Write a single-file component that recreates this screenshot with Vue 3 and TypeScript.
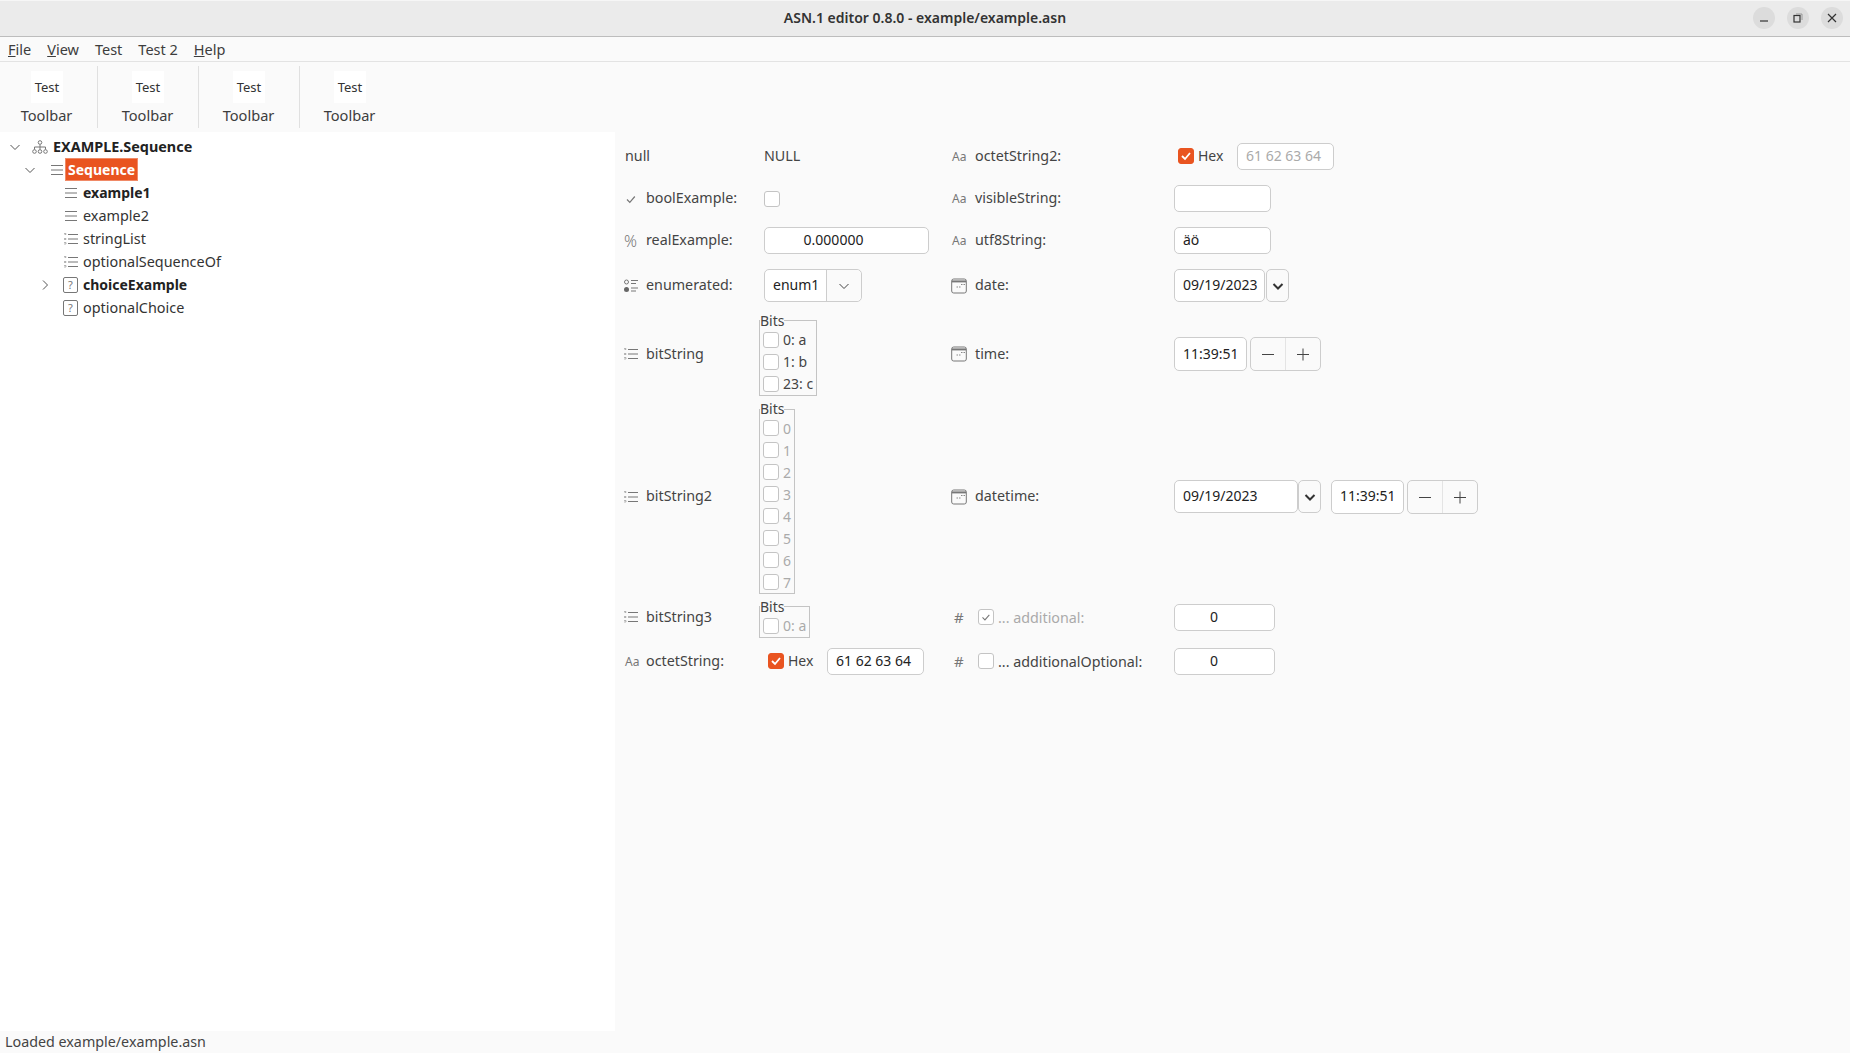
<script setup lang="ts">
const menus = [
  { u: 'F', rest: 'ile' },
  { u: 'V', rest: 'iew' },
  { u: '', rest: 'Test' },
  { u: '', rest: 'Test 2' },
  { u: 'H', rest: 'elp' },
]
const tools = [1, 2, 3, 4]
interface TreeRow { text: string; depth: number; arrow?: 'down' | 'right'; icon: string; bold?: boolean; sel?: boolean }
const tree: TreeRow[] = [
  { text: 'EXAMPLE.Sequence', depth: 0, arrow: 'down', icon: 'i-tree', bold: true },
  { text: 'Sequence', depth: 1, arrow: 'down', icon: 'i-lines', bold: true, sel: true },
  { text: 'example1', depth: 2, icon: 'i-lines', bold: true },
  { text: 'example2', depth: 2, icon: 'i-lines' },
  { text: 'stringList', depth: 2, icon: 'i-list' },
  { text: 'optionalSequenceOf', depth: 2, icon: 'i-list' },
  { text: 'choiceExample', depth: 2, arrow: 'right', icon: 'choice', bold: true },
  { text: 'optionalChoice', depth: 2, icon: 'choice' },
]
const bits1 = ['0: a', '1: b', '23: c']
const bits2 = ['0', '1', '2', '3', '4', '5', '6', '7']
</script>

<template>
  <div class="win">
    <svg class="defs" width="0" height="0" aria-hidden="true">
      <symbol id="i-tree" viewBox="0 0 16 16">
        <g fill="none" stroke="#777" stroke-width="1">
          <circle cx="8" cy="3.5" r="1.8" /><circle cx="2.5" cy="12.5" r="1.8" /><circle cx="8" cy="12.5" r="1.8" /><circle cx="13.5" cy="12.5" r="1.8" />
          <path d="M8 5.5v5M2.5 10.5V8h11v2.5" />
        </g>
      </symbol>
      <symbol id="i-lines" viewBox="0 0 16 16">
        <path d="M2 3.5h12M2 8h12M2 12.5h12" stroke="#777" stroke-width="1" fill="none" />
      </symbol>
      <symbol id="i-list" viewBox="0 0 16 16">
        <path d="M5 3.5h10M5 8h10M5 12.500h10" stroke="#777" stroke-width="1" fill="none" />
        <path d="M1 2.500h2v1H1.500M1 7.500h2v1H1M1 11.500h2v1.500H1" stroke="#999" stroke-width=".7" fill="none" />
      </symbol>
      <symbol id="i-check" viewBox="0 0 16 16">
        <path d="M4 8.500l2.800 2.800 5-5.800" fill="none" stroke="#777" stroke-width="1.200" />
      </symbol>
      <symbol id="i-enum" viewBox="0 0 16 16">
        <circle cx="3.500" cy="4" r="2" fill="none" stroke="#777" />
        <circle cx="3.500" cy="11.500" r="2.500" fill="#666" />
        <path d="M8 2.500h7M8 5.500h5M8 10h7M8 13h5" stroke="#777" fill="none" />
      </symbol>
      <symbol id="i-cal" viewBox="0 0 16 16">
        <rect x=".7" y="1" width="14.600" height="14" rx="2" fill="#fafafa" stroke="#777" />
        <path d="M1 3.400h14" stroke="#777" stroke-width="2" />
        <path d="M10 6.500h1.500M12.500 6.500h1.500M5.500 9h1.500M8 9h1.500" stroke="#888" />
      </symbol>
      <symbol id="i-chev" viewBox="0 0 16 16">
        <path d="M3.500 6l4.500 4.500L12.500 6" fill="none" stroke="currentColor" stroke-width="1" />
      </symbol>
      <symbol id="i-chevr" viewBox="0 0 16 16">
        <path d="M6 3.500l4.500 4.500L6 12.500" fill="none" stroke="currentColor" stroke-width="1" />
      </symbol>
      <symbol id="i-chevb" viewBox="0 0 16 16">
        <path d="M3.500 6l4.500 4.500L12.500 6" fill="none" stroke="#333" stroke-width="2" />
      </symbol>
      <symbol id="i-tick" viewBox="0 0 16 16">
        <path d="M4 8l3 3 5-6" fill="none" stroke="#fff" stroke-width="1.800" />
      </symbol>
      <symbol id="i-minus" viewBox="0 0 16 16">
        <path d="M2 8.500h12" stroke="#444" fill="none" />
      </symbol>
      <symbol id="i-plus" viewBox="0 0 16 16">
        <path d="M2 8.500h12M8 2.500v12" stroke="#444" fill="none" />
      </symbol>
    </svg>

    <header class="title">
      <span class="title-text">ASN.1 editor 0.8.0 - example/example.asn</span>
      <div class="wbtns">
        <span class="wbtn"><svg width="10" height="10" viewBox="0 0 10 10"><path d="M1 8h8" stroke="#333" stroke-width="1.200" /></svg></span>
        <span class="wbtn"><svg width="10" height="10" viewBox="0 0 10 10"><rect x="1" y="2.500" width="6" height="6.500" fill="none" stroke="#333" stroke-width="1.200" /><path d="M3 1h6v6" fill="none" stroke="#888" stroke-width=".8" /></svg></span>
        <span class="wbtn"><svg width="10" height="10" viewBox="0 0 10 10"><path d="M1 1l8 8M9 1l-8 8" stroke="#333" stroke-width="1.200" /></svg></span>
      </div>
    </header>

    <nav class="menu">
      <span v-for="m in menus" :key="m.rest" class="menu-item"><u v-if="m.u">{{ m.u }}</u>{{ m.rest }}</span>
    </nav>

    <div class="toolbar">
      <div v-for="t in tools" :key="t" class="tool">
        <span class="tool-icon">Test</span>
        <span class="tool-label">Toolbar</span>
      </div>
    </div>

    <main class="content">
      <section class="tree">
        <div v-for="r in tree" :key="r.text" class="row" :class="'d' + r.depth">
          <span class="arrow">
            <svg v-if="r.arrow" width="16" height="16"><use :href="r.arrow === 'down' ? '#i-chev' : '#i-chevr'" /></svg>
          </span>
          <span v-if="r.icon === 'choice'" class="ticon choice">?</span>
          <svg v-else class="ticon" width="16" height="16"><use :href="'#' + r.icon" /></svg>
          <span class="rtext" :class="{ bold: r.bold, sel: r.sel }">{{ r.text }}</span>
        </div>
      </section>

      <section class="form">
        <!-- row 1 -->
        <span class="lb null">null</span>
        <span class="val plain">NULL</span>
        <span class="ic aa">Aa</span>
        <span class="lb">octetString2:</span>
        <div class="val hexrow">
          <span class="cb on"><svg width="16" height="16"><use href="#i-tick" /></svg></span>
          <span class="hex">Hex</span>
          <span class="inp w97 dis">61 62 63 64</span>
        </div>

        <!-- row 2 -->
        <svg class="ic svg" width="16" height="16"><use href="#i-check" /></svg>
        <span class="lb">boolExample:</span>
        <div class="val"><span class="cb"></span></div>
        <span class="ic aa">Aa</span>
        <span class="lb">visibleString:</span>
        <div class="val"><span class="inp w97"></span></div>

        <!-- row 3 -->
        <span class="ic pct">%</span>
        <span class="lb">realExample:</span>
        <div class="val"><span class="inp real">0.000000</span></div>
        <span class="ic aa">Aa</span>
        <span class="lb">utf8String:</span>
        <div class="val"><span class="inp w97">äö</span></div>

        <!-- row 4 -->
        <svg class="ic svg" width="16" height="16"><use href="#i-enum" /></svg>
        <span class="lb">enumerated:</span>
        <div class="val">
          <div class="combo">
            <span class="combo-text">enum1</span>
            <span class="combo-btn"><svg width="16" height="16"><use href="#i-chev" /></svg></span>
          </div>
        </div>
        <svg class="ic svg cal" width="16" height="16"><use href="#i-cal" /></svg>
        <span class="lb">date:</span>
        <div class="val">
          <span class="inp tall date">09/19/2023</span>
          <span class="drop"><svg width="16" height="16"><use href="#i-chevb" /></svg></span>
        </div>

        <!-- row 5 -->
        <svg class="ic svg" width="16" height="16"><use href="#i-list" /></svg>
        <span class="lb">bitString</span>
        <div class="val">
          <fieldset class="bits">
            <legend>Bits</legend>
            <label v-for="b in bits1" :key="b" class="bit"><span class="cb"></span>{{ b }}</label>
          </fieldset>
        </div>
        <svg class="ic svg cal" width="16" height="16"><use href="#i-cal" /></svg>
        <span class="lb">time:</span>
        <div class="val">
          <span class="inp tall time">11:39:51</span>
          <div class="stepper">
            <span class="step"><svg width="16" height="16"><use href="#i-minus" /></svg></span>
            <span class="step"><svg width="16" height="16"><use href="#i-plus" /></svg></span>
          </div>
        </div>

        <!-- row 6 -->
        <svg class="ic svg" width="16" height="16"><use href="#i-list" /></svg>
        <span class="lb">bitString2</span>
        <div class="val low">
          <fieldset class="bits off">
            <legend>Bits</legend>
            <label v-for="b in bits2" :key="b" class="bit"><span class="cb"></span>{{ b }}</label>
          </fieldset>
        </div>
        <svg class="ic svg cal" width="16" height="16"><use href="#i-cal" /></svg>
        <span class="lb">datetime:</span>
        <div class="val">
          <span class="inp tall wide">09/19/2023</span>
          <span class="drop flush"><svg width="16" height="16"><use href="#i-chevb" /></svg></span>
          <span class="inp tall time timegap">11:39:51</span>
          <div class="stepper">
            <span class="step"><svg width="16" height="16"><use href="#i-minus" /></svg></span>
            <span class="step"><svg width="16" height="16"><use href="#i-plus" /></svg></span>
          </div>
        </div>

        <!-- row 7 -->
        <svg class="ic svg" width="16" height="16"><use href="#i-list" /></svg>
        <span class="lb">bitString3</span>
        <div class="val low">
          <fieldset class="bits off">
            <legend>Bits</legend>
            <label class="bit"><span class="cb"></span>0: a</label>
          </fieldset>
        </div>
        <span class="ic hash">#</span>
        <div class="lb chk dim"><span class="cb mark"><svg width="14" height="14" viewBox="0 0 16 16"><use href="#i-check" /></svg></span>... additional:</div>
        <div class="val"><span class="inp count">0</span></div>

        <!-- row 8 -->
        <span class="ic aa">Aa</span>
        <span class="lb">octetString:</span>
        <div class="val hexrow">
          <span class="cb on"><svg width="16" height="16"><use href="#i-tick" /></svg></span>
          <span class="hex">Hex</span>
          <span class="inp w97">61 62 63 64</span>
        </div>
        <span class="ic hash">#</span>
        <div class="lb chk"><span class="cb"></span>... additionalOptional:</div>
        <div class="val"><span class="inp count">0</span></div>
      </section>
    </main>

    <footer class="status">Loaded example/example.asn</footer>
  </div>
</template>

<style>
html, body { margin: 0; height: 100%; overflow: hidden; }
</style>

<style scoped>
.defs { position: absolute; }
.win {
  display: flex; flex-direction: column; height: 1053px; width: 1850px;
  font-family: "Noto Sans", sans-serif; font-size: 14.3px; color: #3d3d3d; background: #fafafa;
}
.title {
  box-sizing: border-box; height: 37px; flex: none; background: #ebebeb; border-bottom: 1px solid #bdbdbd;
  box-shadow: inset 0 1px #f6f6f6; padding-bottom: 1px;
  display: flex; align-items: center; justify-content: center; position: relative;
}
.title-text { font-weight: 600; font-size: 14px; color: #333; }
.wbtns { position: absolute; right: 7px; top: 7px; display: flex; gap: 12px; }
.wbtn {
  width: 22px; height: 22px; border-radius: 50%; background: #dcdcdc;
  display: flex; align-items: center; justify-content: center;
}
.menu {
  height: 24px; flex: none; display: flex; align-items: center; padding-left: 8px; gap: 16px;
  border-bottom: 1px solid #e3e3e3; background: #fafafa; font-size: 14.5px;
}
.toolbar { height: 70px; flex: none; display: flex; background: #fafafa; margin-left: -3px; }
.tool {
  width: 100px; height: 62px; margin-top: 4px; border-right: 1px solid #e0e0e0;
  display: flex; flex-direction: column; align-items: center; position: relative;
}
.tool:last-child { border-right: none; }
.tool-icon {
  width: 32px; height: 32px; margin-top: 5px; background: #fff; color: #333; font-size: 13px;
  display: flex; align-items: center; justify-content: center;
}
.tool-label { margin-top: 2px; line-height: 20px; margin-right: 1px; font-size: 14.6px; }
.content { flex: 1; display: flex; min-height: 0; }
.tree { width: 615px; flex: none; background: #fff; padding-top: 3px; color: #333; font-size: 14.4px; }
.row { height: 23px; display: flex; align-items: center; }
.d0 { padding-left: 7px; }
.d1 { padding-left: 22px; }
.d2 { padding-left: 37px; }
.arrow { width: 16px; height: 16px; flex: none; color: #555; display: flex; }
.ticon { flex: none; }
.d0 .ticon { margin-left: 9px; }
.d1 .ticon { margin-left: 11px; }
.d2 .ticon { margin-left: 10px; }
.choice {
  box-sizing: border-box; width: 15px; height: 16px; margin-right: 1px; border: 1px solid #777; border-radius: 2px;
  font-size: 11px; line-height: 14px; text-align: center; color: #777;
}
.rtext { padding: 0 2px; line-height: 23px; }
.d0 .rtext { margin-left: 3px; color: #222; }
.d1 .rtext { padding: 0 3px; }
.d2 .rtext { margin-left: 2px; }
.bold { font-weight: 700; color: #222; font-size: 14px; }
.d0 .bold { font-size: 14.4px; }
.sel { background: #e95420; color: #fff !important; box-shadow: inset 0 0 0 1px #f08a67; }
.form {
  flex: 1; display: grid; padding: 3px 0 0 9px;
  grid-template-columns: 22px 118px 187px 24px 199px 1fr;
  grid-template-rows: 42px 43px 41px 49px 88px 197px 44px 44px;
  align-items: center; align-content: start;
}
.ic { display: flex; align-items: center; color: #777; }
.aa { font-size: 12px; padding-left: 1px; }
.pct { font-size: 16px; padding-left: 0; font-weight: 300; }
.hash { font-size: 15px; padding-left: 3px; }
.svg { margin-left: -1px; }
.cal { margin-left: 0; }
.lb { white-space: nowrap; color: #444; padding-bottom: 2px; }
.null { grid-column: span 2; padding-left: 1px; }
.val { display: flex; align-items: center; }
.low { padding-top: 2px; }
.plain { color: #444; padding-bottom: 2px; }
.inp {
  box-sizing: border-box; height: 27px; background: #fff; border: 1px solid #cdcdcd; border-radius: 5px; font-size: 14px;
  display: flex; align-items: center; padding: 0 8px 2px; color: #222; white-space: nowrap;
}
.w97 { width: 97px; }
.real { width: 165px; justify-content: center; padding-right: 34px; }
.count { width: 101px; justify-content: center; padding-right: 29px; }
.dis { color: #aaa; }
.tall { height: 33px; }
.date { width: 91px; }
.time { width: 73px; height: 34px; }
.wide { width: 124px; }
.timegap { margin-left: 10px; width: 73px; }
.drop {
  box-sizing: border-box; width: 23px; height: 33px; background: #fafafa; border: 1px solid #cdcdcd; border-radius: 5px; margin-left: 1px;
  display: flex; align-items: center; justify-content: center;
}
.flush { margin-left: 0; }
.stepper {
  box-sizing: border-box; display: flex; width: 71px; height: 34px; border: 1px solid #cdcdcd; border-radius: 5px; margin-left: 3px;
}
.step { flex: 1; display: flex; align-items: center; justify-content: center; }
.step + .step { border-left: 1px solid #e4e4e4; }
.combo {
  box-sizing: border-box; display: flex; width: 98px; height: 33px; background: #fff; border: 1px solid #cdcdcd; border-radius: 5px; color: #222; font-size: 14px;
}
.combo-text { box-sizing: border-box; width: 62px; padding: 0 0 2px 8px; display: flex; align-items: center; border-right: 1px solid #cdcdcd; }
.combo-btn { flex: 1; display: flex; align-items: center; justify-content: center; background: #fafafa; border-radius: 0 5px 5px 0; color: #444; }
.cb {
  box-sizing: border-box; width: 16px; height: 16px; flex: none; background: #fff; border: 1px solid #c4c4c4; border-radius: 3px;
  display: inline-flex; align-items: center; justify-content: center;
}
.cb.on { background: #e95420; border-color: #e95420; }
.cb.on svg { margin: -1px; }
.hexrow { gap: 4px; padding-left: 4px; }
.hex { width: 35px; color: #444; font-size: 14px; padding-bottom: 2px; }
.bits {
  margin: 0 0 0 -5px; padding: 0 3px; border: 1px solid #c4c4c4; min-width: 0; display: flex; flex-direction: column; box-sizing: border-box;
}
.bits legend { padding: 0; margin-left: -3px; line-height: 16px; color: #444; font-size: 14px; }
.bit { display: flex; align-items: center; gap: 4px; height: 22px; color: #444; white-space: nowrap; font-size: 14px; }
.off .bit { color: #aaa; }
.chk { display: flex; align-items: center; gap: 4px; padding-left: 3px; padding-bottom: 0; }
.dim { color: #aaa; }
.mark svg { display: block; }
.status { box-sizing: border-box; height: 22px; flex: none; display: flex; align-items: center; padding: 0 0 1px 5px; background: #fafafa; color: #444; }
</style>
